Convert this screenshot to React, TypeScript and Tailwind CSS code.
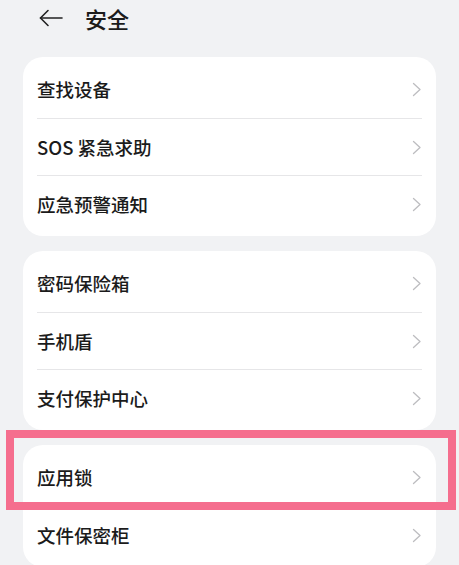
const GROUPS: string[][] = [
  ['查找设备', 'SOS 紧急求助', '应急预警通知'],
  ['密码保险箱', '手机盾', '支付保护中心'],
  ['应用锁', '文件保密柜'],
];

function BackArrow() {
  return (
    <svg width="24" height="18" viewBox="0 0 24 18" fill="none" stroke="#222" strokeWidth="1.6" strokeLinecap="round" strokeLinejoin="round">
      <path d="M23 9H1.5" />
      <path d="M9 1.5L1.5 9L9 16.5" />
    </svg>
  );
}

function Chevron() {
  return (
    <svg width="10" height="15" viewBox="0 0 10 15" fill="none" stroke="#bdbdc0" strokeWidth="1.3" strokeLinecap="round" strokeLinejoin="round">
      <path d="M1.5 1.5L8 7.5L1.5 13.5" />
    </svg>
  );
}

function Row({ label, first }: { label: string; first: boolean }) {
  return (
    <div className="px-[14px]">
      <div className={`flex h-[57px] items-center justify-between ${first ? '' : 'border-t border-[#e6e6e8]'}`}>
        <span className="text-[18.5px] font-medium text-[#1b1b1b] leading-none">{label}</span>
        <Chevron />
      </div>
    </div>
  );
}

export default function App() {
  return (
    <div
      className="relative h-[565px] w-[459px] overflow-hidden bg-[#f1f2f4] px-[23px]"
      style={{ fontFamily: '"Noto Sans CJK SC", "Noto Sans", sans-serif' }}
    >
      <div className="flex h-[36px] items-center pl-[16px] gap-[22px]">
        <BackArrow />
        <span className="text-[22px] font-medium text-[#1b1b1b] leading-none">安全</span>
      </div>
      <div className="mt-[21px] flex flex-col gap-[15px]">
        {GROUPS.map((group, gi) => (
          <div key={gi} className="rounded-[20px] bg-white py-[4px]">
            {group.map((label, i) => (
              <Row key={label} label={label} first={i === 0} />
            ))}
          </div>
        ))}
      </div>
      <div
        aria-hidden="true"
        className="pointer-events-none absolute left-[6px] top-[430px] h-[80px] w-[450px] border-[8px] border-[#f56e8e]"
      />
    </div>
  );
}
